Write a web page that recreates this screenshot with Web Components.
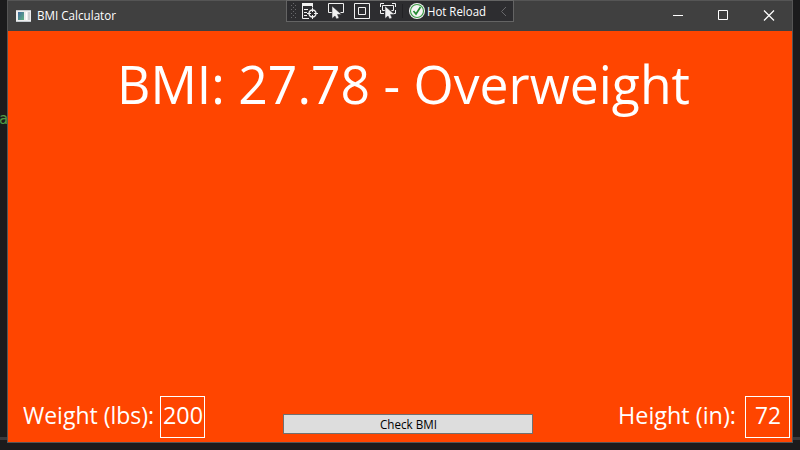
<!DOCTYPE html>
<html lang="en">
<head>
<meta charset="utf-8">
<title>BMI Calculator</title>
<style>
html,body{margin:0;height:100%;overflow:hidden;background:#1b1b1c}
body{font-family:"Open Sans","Noto Sans",sans-serif;color:#fff}
</style>
</head>
<body>
<bmi-desktop>
  <app-window caption="BMI Calculator">
    <debug-toolbar slot="overlay"></debug-toolbar>
    <bmi-view></bmi-view>
  </app-window>
</bmi-desktop>
<script>
const define=(name,html,ready)=>customElements.define(name,class extends HTMLElement{
  constructor(){super();this.attachShadow({mode:'open'}).innerHTML=html;}
  connectedCallback(){if(ready)ready.call(this,this.shadowRoot);}
});

/* Text whose line is condensed or widened to the width attribute, in px. */
define('fit-text',`<style>
:host{display:block;white-space:pre;flex:none}
span{display:inline-block;transform-origin:0 50%}
</style><span><slot></slot></span>`,function(root){
  const s=root.querySelector('span'),w=+this.getAttribute('width');
  this.style.width=w+'px';
  s.style.transform='scaleX('+w/s.getBoundingClientRect().width+')';
});

define('bmi-desktop',`<style>
:host{display:grid;position:relative;width:800px;height:450px;box-sizing:border-box;padding:0 7px 7px;background:linear-gradient(#3a3a3c,#3a3a3c) 0 437px/100% 3px no-repeat #1b1b1c}
.code{position:absolute;left:-1px;top:109px;font:15px/20px "DejaVu Sans Mono",monospace;color:#4f9a45}
</style><span class="code">a</span><slot></slot>`);

define('app-window',`<style>
:host{display:flex;flex-direction:column;position:relative;width:786px;height:443px;box-sizing:border-box;border:1px solid #555;background:#ff4500}
header{display:flex;align-items:center;height:30px;background:#404040;flex:none}
.icon{margin:0 6px 0 8px;flex:none}
fit-text{font-size:12px;line-height:18px}
.controls{display:flex;margin-left:auto}
.controls svg{display:block;width:46px;height:30px;fill:none;stroke:#fff}
main{flex:1;display:flex;flex-direction:column}
</style>
<header>
<svg class="icon" width="15" height="12" viewBox="0 0 15 12"><defs><linearGradient id="g" x2="1" y2="1"><stop stop-color="#406aa0"/><stop offset="1" stop-color="#60b080"/></linearGradient></defs><path fill="#eee" d="M0 0h15v12H0z"/><path fill="#c5cbcf" d="M0 0h15v1H0zM0 11h15v1H0z"/><path fill="url(#g)" d="M2 2h6v8H2z"/><path fill="#fff" d="M10 2h1v8h-1z"/><path fill="#cfd2d4" d="M12 2h2v8h-2z"/></svg>
<div class="cap"></div>
<div class="controls">
<svg><path d="M19 14.500h10"/></svg>
<svg><path d="M18.500 9.500h9v9h-9z"/></svg>
<svg><path stroke-width="1.200" d="M18 9.500l10 10M28 9.500l-10 10"/></svg>
</div>
</header>
<slot name="overlay"></slot>
<main><slot></slot></main>`,function(root){
  const t=document.createElement('fit-text');
  t.setAttribute('width','79');
  t.textContent=this.getAttribute('caption');
  root.querySelector('.cap').replaceChildren(t);
});

define('debug-toolbar',`<style>
:host{position:absolute;left:278px;top:-1px;display:flex;align-items:center;width:228px;height:22px;box-sizing:border-box;border:1px solid #646464;background:#2d2d30}
svg{display:block;flex:none}
fit-text{font-size:12px;line-height:18px;padding-top:1px}
</style>
<svg width="140" height="20" viewBox="0 0 140 20" fill="none" stroke="#f1f1f1">
<defs><pattern id="p" width="4" height="4" patternUnits="userSpaceOnUse"><path fill="#68686b" stroke="none" d="M0 0h1v1H0zM2 2h1v1H2z"/></pattern></defs>
<path fill="url(#p)" stroke="none" d="M3 1h6v17H3z"/>
<g><path d="M22 17.500h-6.500v-15h10v4"/><path stroke-width="3" d="M15 3.500h11"/><path d="M17 8.500h4M17 11.500h3M17 14.500h3"/><circle cx="25.500" cy="12.500" r="3.500" stroke-width="1.400"/><path d="M25.500 7v4M25.500 14v4M20 12.500h4M27 12.500h4"/></g>
<path d="M45 11.500h-3.500v-9h15v9h-3"/><path fill="#f1f1f1" stroke="#2d2d30" stroke-width=".5" d="M45 5v12.500l3-2.500 1.500 3 2.500-1-1.500-3.500h4z"/>
<path d="M67.500 2.500h15v15h-15zM71.500 6.500h7v7h-7z"/>
<path d="M93.500 6V2.500H97M105 2.500h3.500V6M108.500 9v3.500h-3M97 12.500h-3.500V9M98 9.500h-2.500v-5h11v5h-2"/><path fill="#f1f1f1" stroke="#2d2d30" stroke-width=".5" d="M98 5v12.500l3-2.500 1.500 3 2.500-1-1.500-3.500h4z"/>
<path stroke="#222225" d="M115.500 3v14"/>
<circle cx="130" cy="10" r="8" fill="#f4f4f4" stroke="none"/><circle cx="130" cy="10" r="6.500" stroke="#3a9a43" stroke-width="1.100"/><path stroke="#258a32" stroke-width="1.700" d="M126.500 10l2.500 3 4.500-7"/>
</svg>
<fit-text width="59">Hot Reload</fit-text>
<svg width="26" height="20" fill="none" stroke="#68686b"><path d="M20 6l-4.500 4.500L20 15"/></svg>`);

define('value-box',`<style>
:host{display:flex;align-items:center;justify-content:center;width:45px;height:42px;box-sizing:border-box;border:1px solid #fff;font-size:23.500px;line-height:32px;padding-bottom:4px}
</style><slot></slot>`);

define('push-button',`<style>
:host{display:flex;width:250px;height:20px}
button{all:unset;flex:1;display:flex;align-items:center;justify-content:center;box-sizing:border-box;border:1px solid #707070;background:#ddd;color:#000;font-size:12px;line-height:18px;padding-top:2px}
</style><button><slot></slot></button>`);

define('bmi-view',`<style>
:host{flex:1;display:flex;flex-direction:column;justify-content:space-between}
.result{font-size:53px;line-height:72px;padding:17px 0 0 109px}
.inputs{display:flex;align-items:flex-end;height:46px;padding:0 2px 4px 15px}
.field{display:flex;align-items:center;font-size:23.500px;line-height:32px}
.label{padding-bottom:4px}
.height .label{margin:0 3px 0 1px}
push-button{margin:0 84px 4px 78px}
</style>
<fit-text class="result" width="573">BMI: 27.78 - Overweight</fit-text>
<div class="inputs">
<div class="field"><fit-text class="label" width="137">Weight (lbs): </fit-text><value-box><fit-text width="40">200</fit-text></value-box></div>
<push-button><fit-text width="57">Check BMI</fit-text></push-button>
<div class="field height"><fit-text class="label" width="124">Height (in): </fit-text><value-box><fit-text width="26">72</fit-text></value-box></div>
</div>`);
</script>
</body>
</html>
